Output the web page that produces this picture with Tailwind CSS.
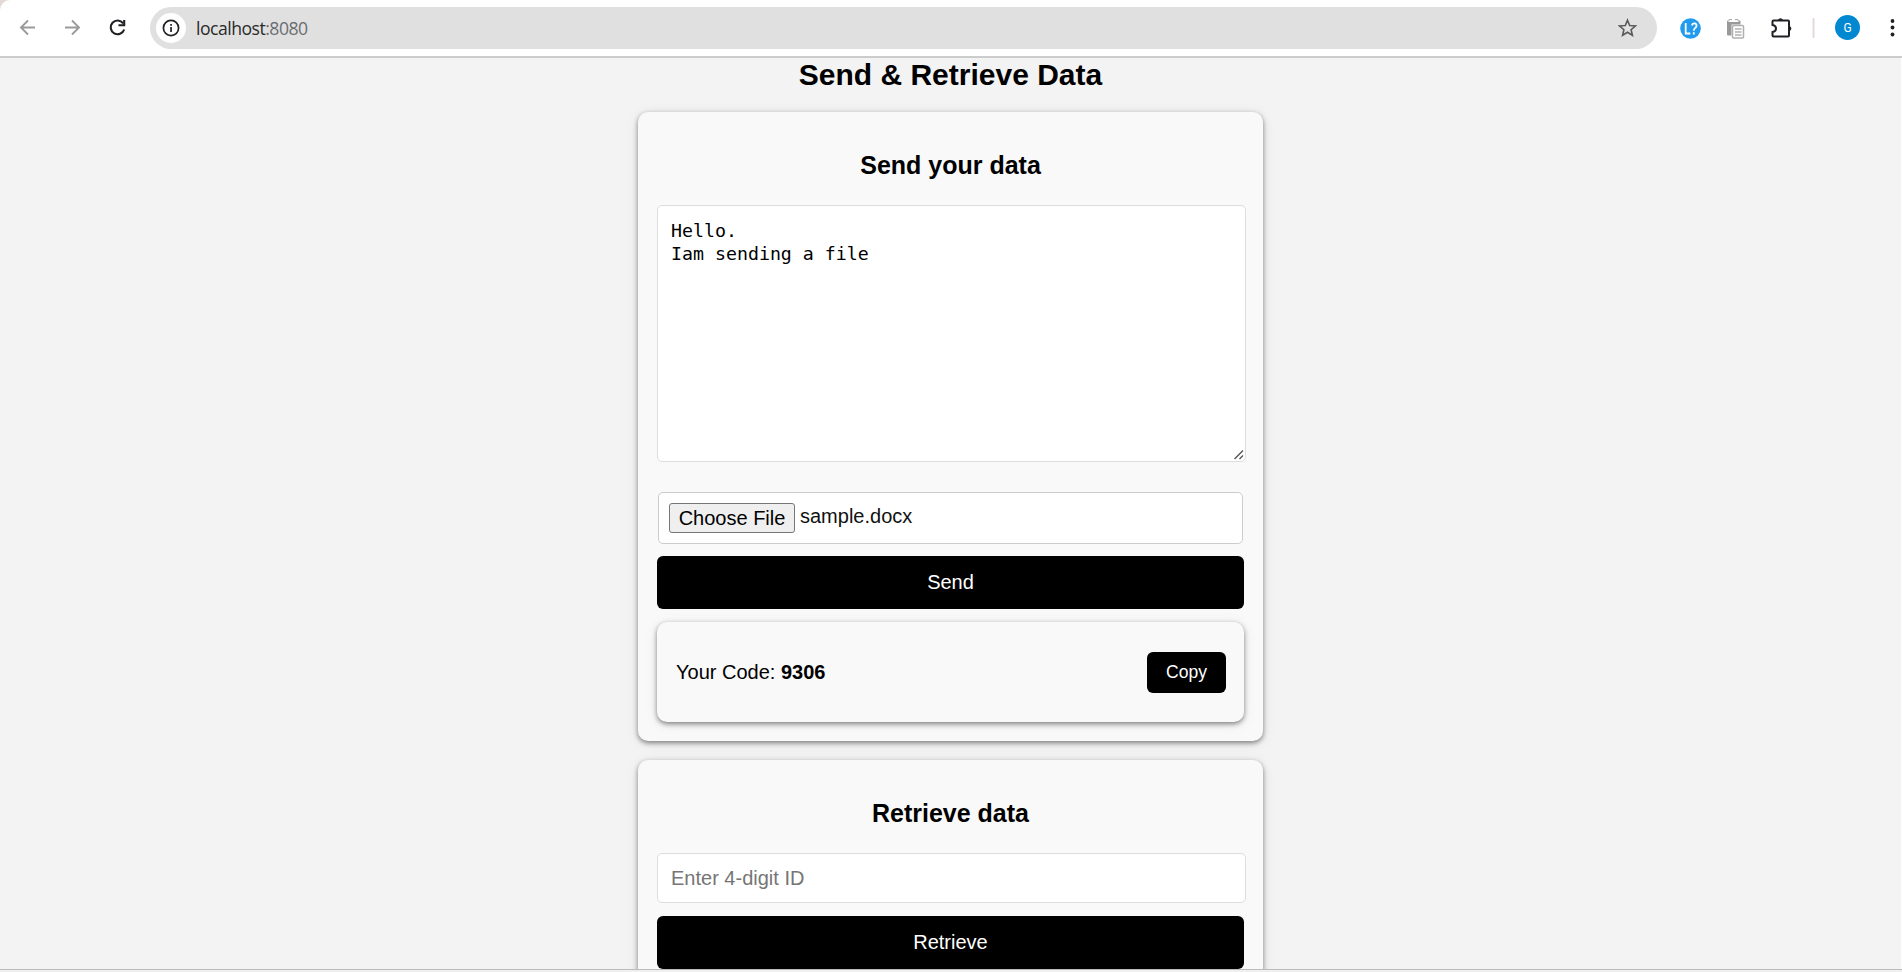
<!DOCTYPE html>
<html lang="en">
<head>
<meta charset="utf-8">
<title>Send &amp; Retrieve Data</title>
<script src="https://cdn.jsdelivr.net/npm/@tailwindcss/browser@4"></script>
</head>
<body class="w-[1902px] h-[972px] overflow-hidden flex flex-col bg-[#f3f3f3] text-black font-['Liberation_Sans',Arial,sans-serif]">
<div class="h-[58px] shrink-0 bg-[#e2d8d5]">
<header class="h-[58px] rounded-tl-[10px] bg-white border-b-2 border-[#cccccc] flex items-start">
  <svg class="w-[150px] h-[56px] shrink-0" viewBox="0 0 150 56" fill="none" stroke-width="1.9">
    <path d="M35 27.5H21.5M28 20.5L21 27.5L28 34.5" stroke="#9a9a9a"/>
    <path d="M65 27.5H78.500M72 20.500L79 27.500L72 34.500" stroke="#9a9a9a"/>
    <path d="M123.200 23.300A6.900 6.900 0 1 0 124.200 29.500" stroke="#202124" stroke-width="2.100"/>
    <path d="M124.200 20V25.200H118.500" stroke="#202124" stroke-width="2.100"/>
  </svg>
  <div class="mt-[7px] w-[1507px] h-[42px] rounded-full bg-[#e0e0e0] flex items-center pl-[6px] pr-[19px]">
    <div class="size-[30px] rounded-full bg-white flex items-center justify-center">
      <svg class="size-[18px]" viewBox="0 0 18 18"><circle cx="9" cy="9" r="7.600" fill="none" stroke="#202124" stroke-width="1.700"/><path d="M8.200 8h1.700v5H8.200zM8.200 5h1.700v1.700H8.200z" fill="#202124"/></svg>
    </div>
    <div class="ml-[10px] flex-1 text-[17.6px] leading-[24px] tracking-[-0.5px] text-[#2a2a2a] font-['Open_Sans','Noto_Sans',sans-serif]">localhost<span class="text-[#6a6d70]">:8080</span></div>
    <svg class="size-[20px]" viewBox="0 0 20 20" fill="none" stroke="#5a5a5a" stroke-width="1.600"><path d="M9.500 2.200L11.700 7.500L17.400 8L13.100 11.700L14.400 17.300L9.500 14.300L4.600 17.300L5.900 11.700L1.600 8L7.300 7.500Z"/></svg>
  </div>
  <svg class="w-[245px] h-[56px] shrink-0" viewBox="1657 0 245 56">
    <circle cx="1690.500" cy="28.500" r="10.300" fill="#229bee"/>
    <path d="M1685.700 23V33.500H1690.300M1692 25.500C1692.500 22.500 1697 22.800 1696.500 26C1696.200 28 1693.800 28 1693.800 30.800M1693.800 32.300V34.400" fill="none" stroke="#fff" stroke-width="1.800"/>
    <path d="M1728 20.500H1728.500V22H1738.500V20.500H1739.500Q1740.500 20.500 1740.500 21.500V24.500H1731.500V35.500H1728Q1727 35.500 1727 34.500V21.500Q1727 20.500 1728 20.500Z" fill="#999"/>
    <path d="M1729 21V19.500H1732M1735 19.500H1738V21" fill="none" stroke="#aaa" stroke-width="1"/>
    <rect x="1732.500" y="25.500" width="11" height="12.500" rx="1" fill="#fff" stroke="#b0b0b0" stroke-width="1.500"/>
    <path d="M1735 29H1741.500M1735 32H1741.500M1735 35H1741.500" stroke="#b0b0b0" stroke-width="1.300"/>
    <path d="M1773.500 20.500H1788Q1789 20.500 1789 21.500V35.500Q1789 36.500 1788 36.500H1773.500Q1772.500 36.500 1772.500 35.500V32Q1776 31.500 1776 28.500Q1776 25.500 1772.500 25V21.500Q1772.500 20.500 1773.500 20.500Z" fill="none" stroke="#202124" stroke-width="2"/>
    <path d="M1778 20A2.700 2.700 0 0 1 1783 20ZM1789.500 26A2.600 2.600 0 0 1 1789.500 31Z" fill="#202124"/>
    <rect x="1812.500" y="18" width="2" height="20" rx="1" fill="#e3dad8"/>
    <circle cx="1847.500" cy="27.500" r="12.500" fill="#0288d1"/>
    <text x="1847.500" y="32" text-anchor="middle" font-family="Roboto" font-size="12" fill="#fff">G</text>
    <g fill="#202124"><circle cx="1892.500" cy="21" r="1.900"/><circle cx="1892.500" cy="27.500" r="1.900"/><circle cx="1892.500" cy="34.500" r="1.900"/></g>
  </svg>
</header>
</div>
<main class="h-[911px] shrink-0 overflow-hidden flex flex-col items-center border-r border-white">
  <h1 class="h-[54px] shrink-0 text-[30px] leading-[34px] font-bold">Send &amp; Retrieve Data</h1>
  <section class="w-[625px] h-[629px] shrink-0 rounded-[10px] bg-[#f9f9f9] px-[19px] shadow-[0_2px_5px_rgba(0,0,0,0.45),0_2px_14px_rgba(0,0,0,0.08)] flex flex-col">
    <h2 class="mt-[39px] text-[25px] leading-[28px] font-bold text-center">Send your data</h2>
    <div class="relative mt-[26px] w-[589px] h-[257px] shrink-0 rounded-[5px] border border-[#dddddd] bg-white px-[13px] pt-[13px] text-[18.25px] leading-[23px] font-['DejaVu_Sans_Mono',monospace]">Hello.<br>Iam sending a file
      <svg class="absolute right-[1px] bottom-[1px] size-[10px]" viewBox="0 0 10 10" stroke="#555" stroke-width="1.400"><path d="M0.500 9L9 0.500M5.500 9L9 5.500"/></svg>
    </div>
    <div class="mt-[30px] ml-px w-[585px] h-[52px] shrink-0 rounded-[5px] border border-[#cccccc] bg-white flex items-start pl-[10px] pt-[10px] text-[20px] text-[#111]">
      <span class="w-[126px] h-[30px] rounded-[3px] border border-[#767676] bg-[#efefef] text-center leading-[28px] text-black">Choose File</span>
      <span class="ml-[5px] leading-[27px]">sample.docx</span>
    </div>
    <button class="mt-[12px] h-[53px] shrink-0 rounded-[6px] bg-black text-white text-[20px] leading-[53px]">Send</button>
    <div class="mt-[13px] h-[100px] shrink-0 rounded-[10px] bg-[#f9f9f9] pl-[19px] pr-[18px] flex items-center justify-between shadow-[0_2px_5px_rgba(0,0,0,0.45),0_2px_14px_rgba(0,0,0,0.08)]">
      <p class="text-[20px] leading-[24px]">Your Code: <b>9306</b></p>
      <button class="w-[79px] h-[41px] rounded-[6px] bg-black text-white text-[17.5px]">Copy</button>
    </div>
  </section>
  <section class="mt-[19px] w-[625px] h-[300px] shrink-0 rounded-[10px] bg-[#f9f9f9] px-[19px] shadow-[0_2px_5px_rgba(0,0,0,0.45),0_2px_14px_rgba(0,0,0,0.08)] flex flex-col">
    <h2 class="mt-[39px] text-[25px] leading-[28px] font-bold text-center">Retrieve data</h2>
    <input class="mt-[26px] w-[589px] h-[50px] shrink-0 rounded-[5px] border border-[#dddddd] bg-white px-[13px] text-[20px] placeholder:text-[#757575]" placeholder="Enter 4-digit ID">
    <button class="mt-[13px] h-[53px] shrink-0 rounded-[6px] bg-black text-white text-[20px] leading-[53px]">Retrieve</button>
  </section>
</main>
<div class="h-[3px] shrink-0 border-t border-[#bbbbbb] bg-[#f0f0f0]"></div>
</body>
</html>
